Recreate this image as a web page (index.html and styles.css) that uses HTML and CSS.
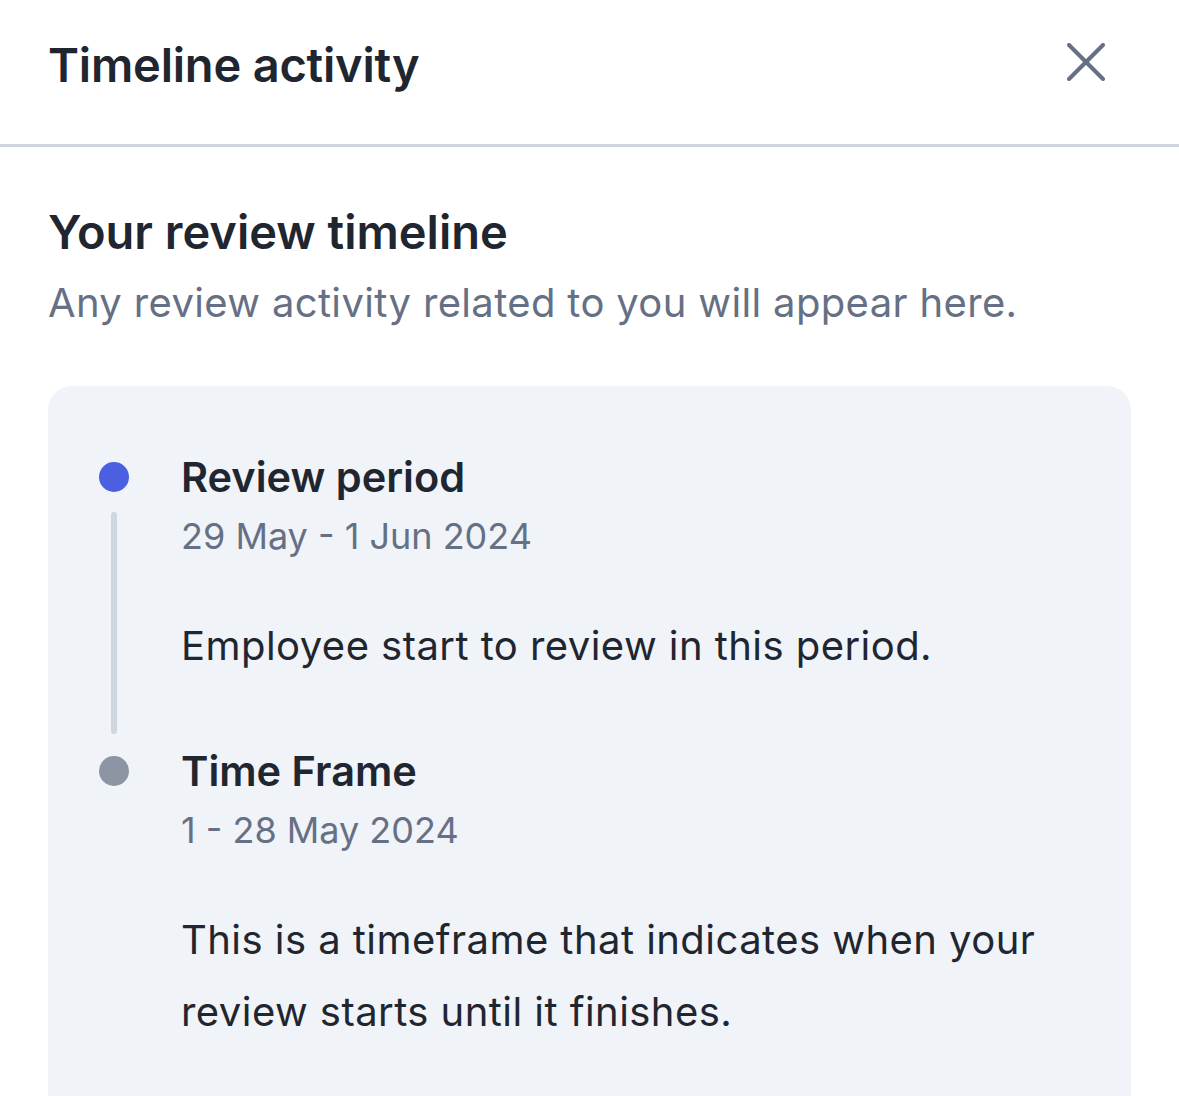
FILE: index.html
```html
<!DOCTYPE html>
<html lang="en">
<head>
<meta charset="utf-8">
<title>Timeline activity</title>
<link rel="stylesheet" href="styles.css">
</head>
<body>
<header class="sheet-header">
  <h1 class="sheet-title">Timeline activity</h1>
  <button class="close-btn" aria-label="Close">
    <svg width="38" height="38" viewBox="0 0 38 38" fill="none" stroke="#667085" stroke-width="4" stroke-linecap="round">
      <line x1="2" y1="2" x2="36" y2="36"/>
      <line x1="36" y1="2" x2="2" y2="36"/>
    </svg>
  </button>
</header>
<main class="content">
  <h2 class="section-title">Your review timeline</h2>
  <p class="section-sub">Any review activity related to you will appear here.</p>
  <div class="card">
    <div class="tl-item">
      <div class="tl-marker">
        <div class="tl-dot-row"><span class="tl-dot tl-dot-active"></span></div>
        <span class="tl-line"></span>
      </div>
      <div class="tl-body">
        <div class="tl-title">Review period</div>
        <div class="tl-date">29 May - 1 Jun 2024</div>
        <p class="tl-desc">Employee start to review in this period.</p>
      </div>
    </div>
    <div class="tl-item">
      <div class="tl-marker">
        <div class="tl-dot-row"><span class="tl-dot tl-dot-idle"></span></div>
      </div>
      <div class="tl-body">
        <div class="tl-title">Time Frame</div>
        <div class="tl-date">1 - 28 May 2024</div>
        <p class="tl-desc">This is a timeframe that indicates when your review starts until it finishes.</p>
      </div>
    </div>
  </div>
</main>
</body>
</html>
```

FILE: styles.css
```css
* { box-sizing: border-box; }
html, body { margin: 0; padding: 0; background: #ffffff; }
body {
  font-family: Inter, "Noto Sans", "Liberation Sans", sans-serif;
  color: #1f2630;
  overflow: hidden;
}
.sheet-header {
  height: 147px;
  padding: 36px 50px 0 48px;
  border-bottom: 3px solid #d0d5dd;
  display: flex;
  justify-content: space-between;
  align-items: flex-start;
}
.sheet-title {
  margin: 0;
  font-size: 47px;
  line-height: 58px;
  font-weight: 600;
  color: #1f2630;
  letter-spacing: -0.2px;
}
.close-btn {
  margin: 7px 24px 0 0;
  padding: 0;
  width: 38px;
  height: 38px;
  border: none;
  background: none;
  display: flex;
}
.content {
  padding: 57px 48px 0 48px;
}
.section-title {
  margin: 0;
  font-size: 47px;
  line-height: 56px;
  font-weight: 600;
  color: #1f2630;
  letter-spacing: 0;
}
.section-sub {
  margin: 19px 0 0 0;
  font-size: 40px;
  line-height: 48px;
  color: #667085;
  letter-spacing: 0.35px;
}
.card {
  margin-top: 59px;
  background: #f0f3f8;
  border-radius: 24px;
  padding: 66px 50px 40px 51px;
  min-height: 800px;
}
.tl-item {
  display: grid;
  grid-template-columns: 30px 1fr;
  column-gap: 52px;
}
.tl-marker {
  display: flex;
  flex-direction: column;
  align-items: center;
}
.tl-dot-row {
  height: 50px;
  display: flex;
  align-items: center;
}
.tl-dot {
  width: 30px;
  height: 30px;
  border-radius: 50%;
  display: block;
}
.tl-dot-active { background: #4a60e0; }
.tl-dot-idle { background: #8d95a5; }
.tl-line {
  flex: 1;
  width: 6px;
  border-radius: 3px;
  background: #d0d6de;
  margin: 10px 0 12px 0;
}
.tl-title {
  font-size: 41.5px;
  line-height: 50px;
  font-weight: 600;
  color: #1f2630;
}
.tl-date {
  margin-top: 12px;
  font-size: 36px;
  line-height: 44px;
  color: #667085;
  letter-spacing: 0;
}
.tl-desc {
  margin: 52px 0 64px 0;
  font-size: 40px;
  line-height: 72px;
  color: #1f2630;
  letter-spacing: 0.45px;
}
```
